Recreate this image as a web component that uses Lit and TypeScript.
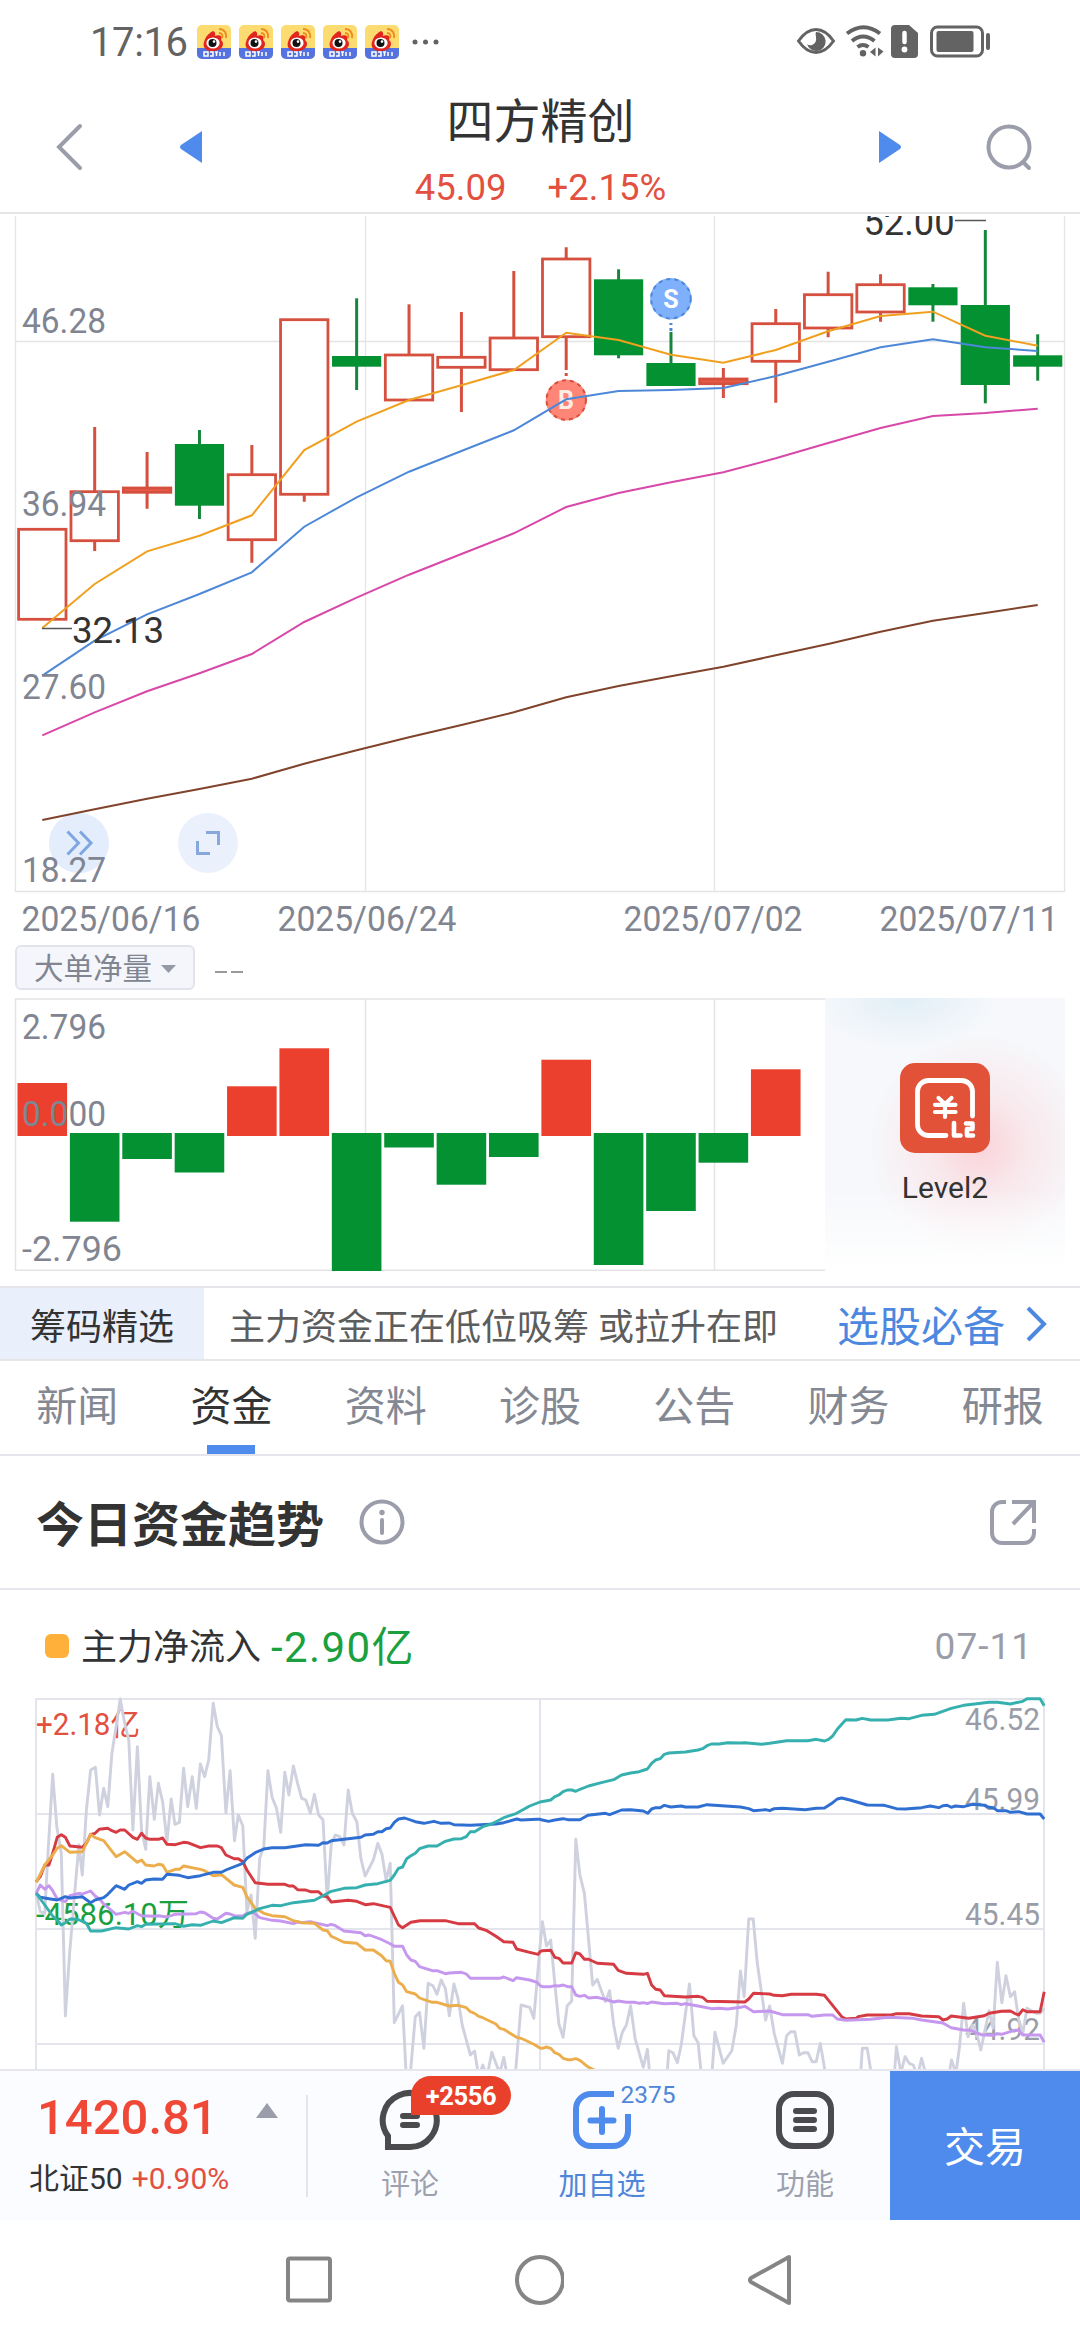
import { LitElement, html, css, svg } from "lit";
import { customElement } from "lit/decorators.js";

// Candle: [up, high, bodyTop, bodyBottom, low]
type Candle = [boolean, number, number, number, number];
const X0 = 42.3;
const STEP = 52.39;
const cx = (i: number) => X0 + i * STEP;

const CANDLES: Candle[] = [
  [true, 529, 529.3, 619.3, 619], [true, 427, 491.7, 540.7, 551], [true, 452, 488, 492.3, 508.7],
  [false, 430, 444, 505.7, 519], [true, 445, 474.7, 539.7, 562.7], [true, 320, 319.7, 494.3, 501.7],
  [false, 298.3, 356, 366.7, 390], [true, 304.3, 355, 400, 400], [true, 312, 357.3, 367.3, 412],
  [true, 271, 338, 369.7, 369], [true, 247.3, 259, 336.7, 370], [false, 269.3, 279.3, 355.3, 358.3],
  [false, 332, 363, 386, 386], [true, 368, 379, 383.7, 398], [true, 309, 323.7, 361.3, 402.7],
  [true, 271.7, 294.7, 328, 337.3], [true, 274.3, 284.7, 312, 321.7], [false, 284, 287.3, 305.3, 321.7],
  [false, 230, 305, 385, 403.3], [false, 334.3, 355.3, 366.7, 380.7],
];

const AVERAGES: [string, number[]][] = [
  ["#f0a01e", [628, 584, 551.3, 535.7, 515.3, 450, 421.7, 400, 385.3, 370, 332.7, 340, 354.7, 362.7, 350, 331.3, 316, 311.7, 335.7, 345.7]],
  ["#4d88d8", [675.7, 640.7, 614.3, 594, 572.3, 526.7, 497.3, 471.7, 451, 430.3, 399.3, 391, 390, 388, 376, 361.7, 347.3, 339.3, 347.3, 351]],
  ["#d848a8", [735.3, 712.3, 691.3, 673.3, 654, 622, 597.7, 574.7, 554, 533.3, 507, 493, 482.3, 472.3, 458.3, 443, 428, 416, 413, 408.7]],
  ["#80432b", [820, 809.3, 798.7, 789, 778.7, 763.7, 750.3, 737.3, 725, 712.3, 697.3, 686, 676.3, 666.7, 655.3, 644, 631.7, 620.7, 613, 605]],
];

// Far edge of every net-volume bar
const BARS: [boolean, number][] = [
  [true, 1083], [false, 1221.7], [false, 1159], [false, 1172.5], [true, 1086.3], [true, 1048.3], [false, 1271],
  [false, 1147.5], [false, 1184.7], [false, 1157], [true, 1059.7], [false, 1265], [false, 1211], [false, 1162.7], [true, 1069.3],
];

// Intraday series: the left and the right half of the session, each in its own 1568-wide units
const FLOW: [string, string, string][] = [
  ["#cfd1df",
    "105,880 117,935 130,940 137,800 153,523 165,680 178,760 190,1248 202,1060 212,940 220,840 229,735 239,825 251,630 263,510 277,502 289,645 301,565 313,620 325,460 337,380 349,297 362,370 374,420 386,690 399,440 411,690 423,748 435,530 448,658 460,550 472,605 485,725 497,597 508,673 521,667 533,505 545,620 558,530 570,625 582,492 594,530 606,480 619,310 631,380 643,407 656,638 668,512 681,722 692,645 705,678 717,935 729,885 741,1015 754,775 766,740 778,512 790,592 803,625 815,697 827,517 839,585 852,498 864,550 876,595 888,600 901,640 913,583 925,645 938,660 950,900 962,730 974,705 987,710 999,735 1011,570 1023,640 1036,665 1048,775 1060,828 1084,780 1097,730 1109,762 1121,840 1133,790 1145,1268 1169,1217 1180,1440 1190,1440 1206,1250 1218,1237 1231,1345 1243,1150 1257,1157 1269,1183 1281,1140 1293,1165 1305,1247 1318,1152 1330,1195 1342,1275 1366,1365 1378,1353 1390,1430 1402,1395 1414,1430 1428,1357 1440,1390 1451,1420 1463,1372 1475,1440 1495,1440 1513,1215 1538,1222 1550,1255 1563,1100",
    "0,1040 7,965 19,1038 31,1020 43,1150 55,1272 67,1312 79,1217 92,1203 104,718 116,825 129,880 141,1020 153,1155 166,1138 190,1205 202,1172 214,1275 227,1345 239,1297 251,1275 263,1217 276,1315 300,1402 312,1348 320,1440 368,1440 374,1352 386,1358 399,1388 410,1335 434,1152 447,1307 459,1328 470,1440 498,1440 508,1297 532,1390 557,1352 570,1275 582,1113 593,1190 606,957 619,957 631,1090 643,1175 655,1260 667,1218 680,1300 704,1390 716,1307 728,1295 740,1295 753,1365 765,1358 778,1358 790,1385 802,1385 814,1330 832,1440 930,1440 936,1345 950,1345 965,1440 1028,1440 1035,1340 1048,1418 1060,1370 1072,1390 1084,1395 1096,1430 1108,1375 1122,1430 1185,1440 1195,1380 1208,1420 1218,1340 1230,1210 1243,1310 1256,1275 1268,1300 1280,1350 1304,1232 1316,1285 1328,1087 1341,1208 1353,1127 1366,1190 1378,1175 1390,1260 1402,1300 1414,1225 1440,1240 1452,1240 1464,1225"],
  ["#d63a42",
    "105,845 117,830 130,795 142,795 153,760 166,712 178,704 190,712 203,738 239,742 251,730 263,703 276,700 288,688 313,685 325,692 337,697 349,690 362,690 386,712 399,718 411,700 423,714 435,718 460,718 472,714 485,733 509,734 533,727 545,728 582,743 606,738 631,738 643,743 656,765 680,776 692,776 705,785 717,810 741,848 778,853 827,853 839,858 852,858 864,869 888,870 901,875 925,875 938,888 950,890 962,906 1011,901 1036,904 1060,914 1084,911 1133,922 1157,975 1169,983 1193,967 1220,962 1293,962 1330,971 1378,971 1390,984 1414,992 1440,1009 1463,1025 1490,1027 1500,1047 1538,1057 1563,1063",
    "0,1055 7,1052 31,1051 43,1072 55,1075 67,1089 92,1089 104,1058 116,1062 129,1078 141,1078 166,1090 214,1093 227,1111 251,1120 300,1123 312,1120 324,1155 336,1168 349,1170 361,1187 422,1191 459,1189 472,1192 485,1204 595,1206 606,1197 620,1180 667,1182 680,1186 704,1187 730,1183 802,1183 826,1186 876,1250 888,1257 918,1255 924,1250 950,1245 1020,1245 1035,1241 1072,1241 1108,1248 1158,1250 1170,1260 1182,1257 1194,1248 1245,1255 1290,1247 1304,1240 1340,1234 1366,1233 1378,1240 1390,1245 1402,1229 1414,1235 1452,1235 1464,1175"],
  ["#c597ee",
    "105,880 117,855 130,868 142,857 153,872 166,897 190,905 203,887 229,880 239,882 263,873 276,888 289,897 301,912 337,943 362,937 374,940 386,934 411,947 448,949 460,947 485,951 508,943 570,941 582,936 594,938 619,955 631,957 656,940 668,942 680,947 705,948 717,940 735,936 754,953 790,961 815,963 852,971 864,966 876,968 901,965 925,971 950,977 962,973 974,977 999,993 1048,998 1060,1007 1072,1005 1109,1019 1133,1031 1145,1039 1169,1039 1181,1065 1193,1080 1206,1084 1218,1100 1255,1112 1269,1112 1293,1121 1305,1119 1340,1117 1354,1122 1366,1135 1451,1135 1463,1131 1490,1142 1500,1133 1538,1140 1560,1147",
    "0,1157 7,1160 31,1160 43,1157 55,1158 67,1155 80,1160 92,1160 104,1185 116,1189 129,1186 141,1194 166,1192 190,1198 214,1206 227,1203 251,1207 276,1207 288,1210 300,1208 312,1211 324,1206 361,1211 399,1210 410,1214 422,1211 459,1218 498,1226 520,1225 545,1227 582,1222 595,1219 620,1235 667,1233 704,1244 778,1244 790,1249 826,1245 850,1245 863,1257 888,1261 960,1258 1010,1252 1084,1255 1108,1260 1170,1269 1194,1283 1230,1290 1250,1291 1280,1304 1316,1306 1328,1301 1340,1303 1378,1291 1390,1291 1402,1305 1452,1305 1464,1327"],
  ["#ecae4c",
    "105,848 130,795 153,765 166,745 178,737 203,757 239,755 251,730 263,703 276,713 301,722 337,770 362,755 399,787 411,780 423,795 447,798 460,793 472,795 485,817 509,808 521,808 533,798 582,808 594,812 619,827 643,824 680,855 705,862 717,890 741,925 766,940 790,947 827,950 852,962 876,968 913,970 938,990 950,992 962,1009 999,1027 1036,1030 1060,1050 1084,1050 1109,1068 1121,1082 1133,1084 1145,1120 1157,1147 1169,1155 1181,1175 1206,1182 1218,1194 1255,1207 1269,1207 1305,1218 1330,1216 1354,1223 1366,1235 1378,1240 1390,1249 1402,1253 1440,1272 1451,1285 1463,1288 1500,1312 1513,1315 1550,1333",
    "0,1344 7,1345 19,1341 31,1345 43,1358 55,1363 67,1375 80,1379 92,1379 104,1376 116,1381 141,1402 165,1414"],
  ["#2f6fd2",
    "105,880 117,892 142,896 166,900 190,890 203,894 239,890 263,908 276,900 301,893 313,883 337,857 362,868 374,855 399,845 411,850 423,840 447,837 472,838 485,823 521,826 545,833 582,827 619,817 643,817 656,810 705,790 717,775 741,758 766,747 790,743 827,743 888,734 925,736 938,728 950,729 962,722 999,718 1048,712 1060,705 1084,703 1097,695 1109,695 1121,686 1133,684 1145,667 1157,657 1175,654 1206,665 1231,670 1260,664 1281,670 1305,669 1318,674 1366,676 1440,672 1463,668 1500,657 1513,660 1560,658",
    "0,658 7,660 25,664 43,660 67,656 80,659 116,659 139,646 190,640 202,644 237,630 263,629 300,633 313,640 324,627 336,623 349,623 361,616 380,621 410,618 422,621 459,621 485,614 582,621 606,626 620,632 655,629 667,632 680,626 704,625 770,629 802,625 826,624 850,608 863,597 876,594 900,600 950,615 1000,616 1035,626 1060,627 1108,623 1133,618 1158,623 1170,617 1182,616 1194,622 1206,618 1230,620 1256,613 1290,616 1304,622 1316,623 1328,632 1353,632 1366,637 1390,635 1414,642 1452,642 1464,657"],
  ["#36b0ae",
    "105,880 130,915 153,948 166,960 178,975 190,968 203,957 225,958 251,970 263,993 295,993 337,983 374,987 399,977 411,980 423,973 508,971 533,979 558,974 582,976 619,963 643,968 668,958 680,953 705,955 717,943 754,926 790,916 815,917 852,908 913,901 938,887 962,874 999,865 1036,863 1060,855 1097,851 1133,841 1145,825 1157,805 1169,801 1181,776 1193,767 1206,760 1218,746 1243,738 1269,738 1293,724 1318,717 1340,716 1354,710 1366,695 1378,695 1402,680 1427,672 1440,665 1463,653 1500,640 1538,618",
    "0,606 31,600 43,590 55,585 67,575 80,570 92,570 104,574 116,568 141,558 178,548 214,539 237,525 263,519 288,515 312,507 324,490 336,480 349,476 361,463 374,459 422,456 459,450 472,446 485,437 498,432 520,432 545,428 582,429 595,428 643,433 667,430 716,422 778,422 802,418 826,423 838,418 850,408 863,388 876,373 888,359 918,360 936,355 960,360 1010,360 1048,355 1072,356 1108,346 1145,343 1194,325 1230,316 1256,313 1304,307 1328,307 1366,312 1402,304 1414,296 1452,296 1464,317"],
];

const flowPoints = (left: string, right: string) => {
  const conv = (s: string, off: number) =>
    s.split(" ").map((p) => {
      const [x, y] = p.split(",").map(Number);
      return `${(off + x / 2.9037).toFixed(1)},${(1600 + y / 3).toFixed(1)}`;
    });
  return [...conv(left, 0), ...conv(right, 540)].join(" ");
};

const label = (x: number, y: number, w: number, size: number, fill: string, text: string) =>
  svg`<text x=${x} y=${y} font-size=${size} fill=${fill} textLength=${w} lengthAdjust="spacingAndGlyphs">${text}</text>`;

@customElement("app-root")
export class AppRoot extends LitElement {
  static styles = css`
    :host {
      display: flex;
      flex-direction: column;
      width: 1080px;
      height: 2340px;
      overflow: hidden;
      background: #fff;
      color: #333;
      font-family: Roboto, "Noto Sans CJK SC", sans-serif;
    }
    * { box-sizing: border-box; }
    svg { display: block; flex: none; }
    .status { height: 80px; display: flex; align-items: center; padding: 3px 88px 0 90px; flex: none; }
    .time { font-size: 40px; color: #636363; width: 107px; line-height: 40px; letter-spacing: -0.4px; padding-top: 2px; }
    .apps { display: flex; gap: 8px; }
    .grow { flex: 1; }
    .head { height: 134px; border-bottom: 2px solid #e6e6e8; display: flex; flex: none; padding: 0 47px 0 52px; align-items: center; justify-content: space-between; }
    .head-mid { display: flex; flex-direction: column; align-items: center; padding-top: 8px; }
    .name { font-size: 47px; line-height: 64px; height: 76px; color: #333; }
    .quote { display: flex; gap: 41px; font-size: 36.5px; line-height: 44px; color: #e2503f; }
    .side { display: flex; align-items: center; margin-top: 2px; }
    .side.left { gap: 96px; }
    .side.right { gap: 84px; }
    .kline { height: 722px; flex: none; overflow: visible; }
    .picker { height: 62px; display: flex; align-items: center; padding: 0 15px 0; flex: none; gap: 20px; }
    .select { width: 180px; height: 45px; border: 2px solid #e2e4ec; border-radius: 6px; background: #f5f6fb; display: flex; align-items: center; padding: 2px 0 0 17px; gap: 9px; font-size: 29.5px; line-height: 40px; color: #808591; margin-top: 1px;}
    .dashes { display: flex; gap: 4px; padding-top: 9px; }
    .dashes i { width: 12px; height: 2px; background: #9a9a9e; }
    .net { height: 273px; display: flex; flex: none; padding-right: 15px; margin-bottom: 15px; }
    .level { width: 240px; height: 273px; display: flex; flex-direction: column; align-items: center; padding-top: 65px; gap: 17px; font-size: 30px; line-height: 36px; color: #333;
      background:
        linear-gradient(to bottom, transparent 70%, #fff 100%),
        radial-gradient(ellipse 90px 50px at 80px 0px, rgba(222, 237, 246, .9), rgba(222, 237, 246, .45) 50%, rgba(222, 237, 246, 0)),
        radial-gradient(circle 112px at 155px 148px, rgba(251, 205, 212, .85), rgba(251, 215, 220, .45) 45%, rgba(251, 225, 230, 0)),
        #f6f8fb; }
    .promo { height: 75px; flex: none; display: flex; align-items: center; border: solid #e4e6ea; border-width: 2px 0; font-size: 36px; }
    .tag { width: 204px; height: 100%; background: #e9f0fc; display: flex; align-items: center; justify-content: center; }
    .msg { padding-left: 25px; color: #5d5d5d; flex: 1; white-space: nowrap; }
    .more { color: #4d88e0; font-size: 42px; padding-right: 20px; }
    .promo svg { margin-right: 33px; }
    .tabs { height: 95px; flex: none; display: grid; grid-template-columns: repeat(7, 1fr); border-bottom: 2px solid #e4e6ec; }
    .tab { display: flex; flex-direction: column; align-items: center; justify-content: space-between; color: #848893; font-size: 41px; line-height: 60px; padding-top: 16px; }
    .tab.on { color: #333; }
    .tab.on::after { content: ""; width: 48px; height: 9px; background: #4f8bec; }
    .title { height: 134px; flex: none; display: flex; align-items: center; padding: 0 43px 0 36px; border-bottom: 2px solid #e6e6ee; font-size: 48px; }
    .heading { font-weight: 700; margin-top: -3px; }
    .title .info { margin-left: 34px; }
    .legend { height: 106px; flex: none; display: flex; align-items: center; padding: 0 47px 0 45px; font-size: 36px; }
    .swatch { width: 24px; height: 24px; border-radius: 6px; background: #feb03a; margin: 5px 12px 0 0; }
    .legend-name { padding-top: 2px; }
    .net-in { color: #1aa03e; font-size: 42px; margin-left: 10px; letter-spacing: 1.4px; }
    .day { color: #9a9da8; font-size: 37px; letter-spacing: 1px; padding-top: 6px; }
    .flow { height: 373px; flex: none; }
    .bar { height: 151px; flex: none; display: flex; background: #fafcff; border-top: 2px solid #e6e6ee; }
    .index { width: 308px; display: flex; justify-content: space-between; margin: 24px 0; border-right: 2px solid #e2e4ec; height: 102px; }
    .index-col { padding-left: 29px; display: flex; flex-direction: column; margin-top: -8px; white-space: nowrap; }
    .value { font-size: 49px; font-weight: 500; line-height: 62px; color: #f04836; padding-left: 8px; margin-bottom: 8px; }
    .sub { font-size: 30px; line-height: 44px; }
    .sub span { color: #e2503f; margin-left: 9px; }
    .index svg { margin: 8px 28px 0 0; }
    .acts { flex: 1; display: flex; justify-content: space-between; padding: 18px 54px 0 71px; }
    .act { display: flex; flex-direction: column; align-items: center; position: relative; font-size: 29px; line-height: 40px; gap: 14px; color: #9da0ad; }
    .act.blue { color: #4f86d8; padding-left: 28px; padding-right: 43px; margin-left: 4px; }
    .badge { position: absolute; left: 32px; top: -13px; width: 100px; height: 39px; border-radius: 20px 20px 20px 0; background: #e9402c; color: #fff; font-weight: 700; font-size: 25.5px; line-height: 41px; text-align: center; letter-spacing: -0.4px; }
    .count { position: absolute; left: 90px; top: -8px; font-size: 24.5px; line-height: 28px; }
    .trade { width: 190px; background: #4f8bec; color: #fff; font-size: 41px; display: flex; align-items: center; justify-content: center; padding-bottom: 3px; }
    .nav { flex: 1; display: flex; padding: 34px 287px 0 283px; justify-content: space-between; align-items: flex-start; }
  `;

  private appIcon() {
    return svg`<svg width="34" height="34" viewBox="0 0 34 34">
      <defs><clipPath id="r"><rect width="34" height="34" rx="5"/></clipPath></defs>
      <g clip-path="url(#r)"><rect width="34" height="34" fill="#fcdc70"/><rect y="23" width="34" height="11" fill="#5573e0"/>
      <path d="M13 8c4-4 6 0 5 3 4-2 8 0 6 4 4 3 2 10-6 11-8 1-13-3-11-9 1-4 3-7 6-9z" fill="#e0261f"/>
      <ellipse cx="16" cy="18" rx="6.6" ry="5.6" fill="#fff"/><circle cx="15.5" cy="18" r="4" fill="#111"/><circle cx="17" cy="16.6" r="1.3" fill="#fff"/>
      <path d="M22 4c5 0 8 4 7 9M22 8c3 0 4 2 3 5" fill="none" stroke="#f08a1c" stroke-width="2"/>
      <path d="M7 27h4v4H7zM13 27h3v4h-3M18 27h3M19.500 27v4M23 27v4M27 27v4" fill="none" stroke="#fff" stroke-width="1.500"/></g></svg>`;
  }

  private statusIcons() {
    return svg`<svg width="196" height="42" viewBox="795 20 196 42" fill="none" stroke="#636363">
      <path d="M797.500 40q8-11.500 17.500-11.500T832.500 40q-8 11.500-17.500 11.500T797.500 40z" stroke-width="3"/>
      <path d="M815 31a9.500 9.500 0 1 1-9 12q2 2 5 1 5-2 4-8-1-3 0-5z" fill="#636363" stroke="none"/>
      <path d="M846 32.500q16.500-12.500 33 0M851 40q11-9 22.500 0M856.500 46q5.500-4 11 0" stroke-width="4"/>
      <circle cx="862" cy="52.300" r="3.200" fill="#636363" stroke="none"/>
      <path d="M874.500 46.500v9l-5.500-4.500zM877 46.500v9l5.500-5z" fill="#636363" stroke="none"/>
      <path d="M894 24h14l9 8v21a4 4 0 0 1-4 4h-19a4 4 0 0 1-4-4V28a4 4 0 0 1 4-4z" fill="#636363" stroke="none"/>
      <path d="M903.500 32v9" stroke="#fff" stroke-width="4.500" stroke-linecap="round"/><circle cx="903.500" cy="48.500" r="2.900" fill="#fff" stroke="none"/>
      <rect x="930.500" y="26" width="51" height="29" rx="6" stroke-width="3"/><rect x="935.500" y="30" width="37" height="21" rx="2" fill="#636363" stroke="none"/>
      <path d="M987 34v13" stroke-width="4" stroke-linecap="round"/></svg>`;
  }

  private kline() {
    return svg`<svg class="kline" width="1080" height="722" viewBox="0 214 1080 722">
      <defs><clipPath id="k"><rect x="0" y="216" width="1080" height="100"/></clipPath></defs>
      <path d="M15.500 216V891.500H1064.500V216M365.500 216V891M714.500 216V891M15 341.500H1064" fill="none" stroke="#e4e4e6" stroke-width="1.300"/>
      <circle cx="79" cy="843" r="30" fill="#e3edfb"/><circle cx="208" cy="843" r="30" fill="#ebf1fc"/>
      <path d="M67.500 831.500l11 11.500-11 11.500M80 831.500l11 11.500-11 11.500" fill="none" stroke="#7da6e2" stroke-width="3"/>
      <path d="M206 832.500h12.500V845M197.500 841v12.500H210" fill="none" stroke="#86a8dc" stroke-width="3"/>
      ${CANDLES.map(([up, h, t, b, l], i) => up
        ? svg`<path d="M${cx(i)} ${h}V${t}M${cx(i)} ${b}V${l}" stroke="#d6503f" stroke-width="3"/>
             <rect x=${cx(i) - 23.700} y=${t} width="47.400" height=${b - t} fill=${b - t < 6 ? "#e85a48" : "#fff"} stroke="#d6503f" stroke-width="2.800"/>`
        : svg`<path d="M${cx(i)} ${h}V${l}" stroke="#16863c" stroke-width="3"/>
             <rect x=${cx(i) - 24.600} y=${t} width="49.200" height=${b - t} fill="#049132"/>`)}
      <path d="M566.200 373v3" stroke="#d6503f" stroke-width="3"/>
      <path d="M670.900 323v2M670.900 328v3" stroke="#4d88d8" stroke-width="3"/>
      <circle cx="566.200" cy="400" r="20.500" fill="#ff8576"/><circle cx="566.200" cy="400" r="19.700" fill="none" stroke="#d6503f" stroke-width="2" stroke-dasharray="4 4"/>
      <circle cx="670.900" cy="298.700" r="20.700" fill="#7fb0fb"/><circle cx="670.900" cy="298.700" r="19.800" fill="none" stroke="#4d88d8" stroke-width="2" stroke-dasharray="4 4"/>
      <g font-weight="700" font-size="25" fill="#fff" text-anchor="middle"><text x="566" y="409" fill="#ffece4">B</text><text x="670.900" y="308">S</text></g>
      ${AVERAGES.map(([c, ys]) => svg`<polyline points=${ys.map((y, i) => `${cx(i)},${y}`).join(" ")} fill="none" stroke=${c} stroke-width="2"/>`)}
      <path d="M42 628.500H72M955 220.500H986" stroke="#555" stroke-width="1.500"/>
      ${label(72, 643.300, 92, 37, "#333", "32.13")}<g clip-path="url(#k)">${label(863.500, 235, 91, 37, "#333", "52.00")}</g>
      ${label(22, 333.300, 84, 34.500, "#808591", "46.28")}${label(22, 516, 84, 34.500, "#808591", "36.94")}
      ${label(22, 698.700, 84, 34.500, "#808591", "27.60")}${label(22, 882, 84, 34.500, "#808591", "18.27")}
      ${label(21.500, 931, 179, 34.500, "#808591", "2025/06/16")}${label(277.500, 931, 179, 34.500, "#808591", "2025/06/24")}
      ${label(623.500, 931, 179, 34.500, "#808591", "2025/07/02")}${label(879.500, 931, 179, 34.500, "#808591", "2025/07/11")}
    </svg>`;
  }

  private net() {
    return svg`<svg width="825" height="273" viewBox="0 998 825 273">
      <path d="M825 999H15.500V1270.300H825M365.500 999V1270M714.500 999V1270" fill="none" stroke="#e4e4e6" stroke-width="1.500"/>
      ${BARS.map(([up, y], i) => up
        ? svg`<rect x=${cx(i) - 24.800} y=${y} width="49.600" height=${1136 - y} fill="#ea402d"/>`
        : svg`<rect x=${cx(i) - 24.800} y="1133" width="49.600" height=${y - 1133} fill="#049132"/>`)}
      ${label(22, 1039.300, 84, 34.500, "#808591", "2.796")}${label(22, 1126, 84, 34.500, "#808591", "0.000")}${label(22, 1261, 100, 34.500, "#808591", "-2.796")}
    </svg>`;
  }

  private flow() {
    return svg`<svg class="flow" width="1080" height="373" viewBox="0 1696 1080 373" stroke-linejoin="round">
      <path d="M36 2069V1699H1044V2069M36 1814H1044M36 1929H1044M36 2044H1044M540 1699V2069" fill="none" stroke="#e4e5ec" stroke-width="2"/>
      ${label(36, 1735, 104, 31, "#e2503f", "+2.18亿")}${label(36, 1925, 153, 31, "#1aa03e", "-4586.10万")}
      ${label(965, 1729.500, 75, 31, "#9a9da8", "46.52")}${label(965, 1809.500, 75, 31, "#9a9da8", "45.99")}
      ${label(965, 1925, 75, 31, "#9a9da8", "45.45")}${label(965, 2039.500, 75, 31, "#9a9da8", "44.92")}
      ${FLOW.map(([c, a, b]) => svg`<polyline points=${flowPoints(a, b)} fill="none" stroke=${c} stroke-width="2.900"/>`)}
    </svg>`;
  }

  render() {
    return html`
      <div class="status">
        <div class="time">17:16</div>
        <div class="apps">${[0, 1, 2, 3, 4].map(() => this.appIcon())}</div>
        <svg width="40" height="10" viewBox="0 0 40 10" fill="#636363"><circle cx="16" cy="5" r="2.500"/><circle cx="26.500" cy="5" r="2.500"/><circle cx="37" cy="5" r="2.500"/></svg>
        <div class="grow"></div>
        ${this.statusIcons()}
      </div>
      <div class="head">
        <div class="side left">
          <svg width="32" height="48" viewBox="0 0 32 48" fill="none" stroke="#9b9dab" stroke-width="4" stroke-linecap="round"><path d="M28 3L7 24l21 21"/></svg>
          <svg width="22" height="32" viewBox="0 0 22 32" fill="#4f8bec"><path d="M22 0v32L1 18q-2-2 0-4z"/></svg>
        </div>
        <div class="head-mid"><div class="name">四方精创</div><div class="quote"><span>45.09</span><span>+2.15%</span></div></div>
        <div class="side right">
          <svg width="22" height="32" viewBox="0 0 22 32" fill="#4f8bec"><path d="M0 0v32l21-14q2-2 0-4z"/></svg>
          <svg width="48" height="48" viewBox="0 0 48 48" fill="none" stroke="#9b9dab" stroke-width="4" stroke-linecap="round"><circle cx="24" cy="24" r="20.500"/><path d="M38 39l6 6"/></svg>
        </div>
      </div>
      ${this.kline()}
      <div class="picker">
        <div class="select">大单净量<svg width="15" height="8" viewBox="0 0 15 8" fill="#9699a6"><path d="M0 0h15L7.500 8z"/></svg></div>
        <div class="dashes"><i></i><i></i></div>
      </div>
      <div class="net">
        ${this.net()}
        <div class="level">
          <svg width="90" height="90" viewBox="0 0 90 90" fill="none" stroke="#fff" stroke-linecap="round" stroke-linejoin="round"><rect width="90" height="90" rx="15" fill="#e25238" stroke="none"/>
            <path d="M46 72.500H28.500a11 11 0 0 1-11-11v-33a11 11 0 0 1 11-11h33a11 11 0 0 1 11 11V53" stroke-width="4.800"/>
            <path d="M38.500 35l6.500 6 6.500-6M35 41.800h20.500M35 49h20.500M45 42v12" stroke-width="4.200"/>
            <path d="M54 60v12.500h6.500M66 60.500h6.500v5.500H67v6.500h6" stroke-width="4.600"/></svg>
          <span>Level2</span>
        </div>
      </div>
      <div class="promo">
        <div class="tag">筹码精选</div><div class="msg">主力资金正在低位吸筹 或拉升在即</div><div class="more">选股必备</div>
        <svg width="22" height="36" viewBox="0 0 22 36" fill="none" stroke="#4d88e0" stroke-width="4"><path d="M3 2l16 16L3 34"/></svg>
      </div>
      <div class="tabs">${["新闻", "资金", "资料", "诊股", "公告", "财务", "研报"].map((t) => html`<div class="tab ${t === "资金" ? "on" : ""}">${t}</div>`)}</div>
      <div class="title"><span class="heading">今日资金趋势</span>
        <svg class="info" width="48" height="48" viewBox="0 0 48 48" fill="none" stroke="#9b9dab" stroke-width="4"><circle cx="24" cy="24" r="20.500"/><path d="M24 22v13" stroke-linecap="round"/><circle cx="24" cy="14.500" r="2.700" fill="#9b9dab" stroke="none"/></svg>
        <div class="grow"></div>
        <svg width="48" height="48" viewBox="0 0 48 48" fill="none" stroke="#9b9dab" stroke-width="4"><path d="M17 4h-4a10 10 0 0 0-10 10v21a10 10 0 0 0 10 10h22a10 10 0 0 0 10-10v-4M23 4h22v21M44 5L24 26"/></svg>
      </div>
      <div class="legend"><i class="swatch"></i><span class="legend-name">主力净流入</span><span class="net-in">-2.90亿</span><div class="grow"></div><span class="day">07-11</span></div>
      ${this.flow()}
      <div class="bar">
        <div class="index">
          <div class="index-col"><div class="value">1420.81</div><div class="sub">北证50<span>+0.90%</span></div></div>
          <svg width="22" height="15" viewBox="0 0 22 15" fill="#9b9dab"><path d="M11 0l11 15H0z"/></svg>
        </div>
        <div class="acts">
          <div class="act">
            <svg width="62" height="62" viewBox="0 0 62 62" fill="none" stroke="#4b4b4d"><path d="M9 58V47A27 27 0 1 1 31 58z" stroke-width="6"/><path d="M24 27h14M24 36h14" stroke-width="6" stroke-linecap="round"/></svg>
            评论<span class="badge">+2556</span>
          </div>
          <div class="act blue">
            <svg width="62" height="62" viewBox="0 0 62 62" fill="none" stroke="#4f8bec" stroke-width="6"><path d="M43 5H20A15 15 0 0 0 5 20V42A15 15 0 0 0 20 57H42A15 15 0 0 0 57 42V25"/><path d="M31 20v23M19.500 31.500h23" stroke-linecap="round"/></svg>
            加自选<span class="count">2375</span>
          </div>
          <div class="act">
            <svg width="62" height="62" viewBox="0 0 62 62" fill="none" stroke="#4b4b4d" stroke-width="6"><rect x="5" y="5" width="52" height="52" rx="15"/><path d="M22 22h18M22 31h18M22 40h18" stroke-linecap="round"/></svg>
            功能
          </div>
        </div>
        <div class="trade">交易</div>
      </div>
      <div class="nav">
        <svg width="52" height="52" viewBox="0 0 52 52" fill="none" stroke="#858585" stroke-width="4"><rect x="5" y="4.500" width="42" height="42" rx="2"/></svg>
        <svg width="52" height="52" viewBox="0 0 52 52" fill="none" stroke="#858585" stroke-width="4"><circle cx="28" cy="26" r="23"/></svg>
        <svg width="52" height="52" viewBox="0 0 52 52" fill="none" stroke="#858585" stroke-width="4" stroke-linejoin="round"><path d="M48 3v46L10 28q-2-2 0-4z"/></svg>
      </div>`;
  }
}
